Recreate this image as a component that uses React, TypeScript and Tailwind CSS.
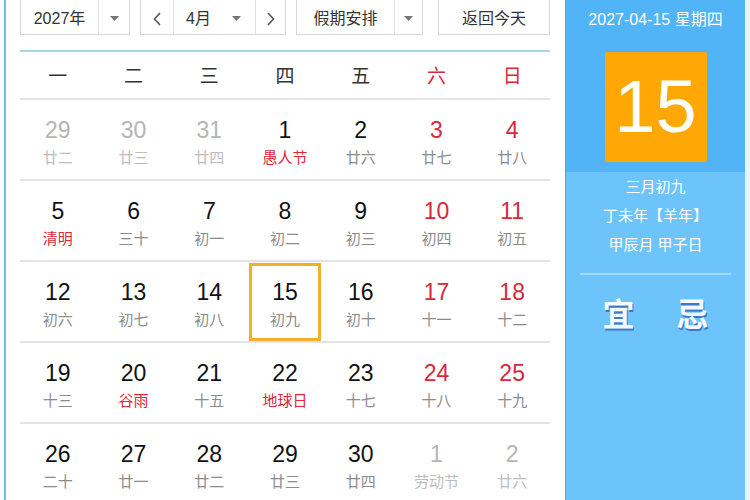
import React from "react";

type Day = { d: number; l: string; dim?: boolean; red?: boolean; fest?: boolean; sel?: boolean };

const weeks: Day[][] = [
  [
    { d: 29, l: "廿二", dim: true },
    { d: 30, l: "廿三", dim: true },
    { d: 31, l: "廿四", dim: true },
    { d: 1, l: "愚人节", fest: true },
    { d: 2, l: "廿六" },
    { d: 3, l: "廿七", red: true },
    { d: 4, l: "廿八", red: true },
  ],
  [
    { d: 5, l: "清明", fest: true },
    { d: 6, l: "三十" },
    { d: 7, l: "初一" },
    { d: 8, l: "初二" },
    { d: 9, l: "初三" },
    { d: 10, l: "初四", red: true },
    { d: 11, l: "初五", red: true },
  ],
  [
    { d: 12, l: "初六" },
    { d: 13, l: "初七" },
    { d: 14, l: "初八" },
    { d: 15, l: "初九", sel: true },
    { d: 16, l: "初十" },
    { d: 17, l: "十一", red: true },
    { d: 18, l: "十二", red: true },
  ],
  [
    { d: 19, l: "十三" },
    { d: 20, l: "谷雨", fest: true },
    { d: 21, l: "十五" },
    { d: 22, l: "地球日", fest: true },
    { d: 23, l: "十七" },
    { d: 24, l: "十八", red: true },
    { d: 25, l: "十九", red: true },
  ],
  [
    { d: 26, l: "二十" },
    { d: 27, l: "廿一" },
    { d: 28, l: "廿二" },
    { d: 29, l: "廿三" },
    { d: 30, l: "廿四" },
    { d: 1, l: "劳动节", dim: true },
    { d: 2, l: "廿六", dim: true },
  ],
];

const heads = ["一", "二", "三", "四", "五", "六", "日"];

function Caret() {
  return (
    <svg width="9" height="5" viewBox="0 0 9 5" className="fill-[#777]">
      <path d="M0 0h9L4.5 5z" />
    </svg>
  );
}

function Chevron({ dir }: { dir: "l" | "r" }) {
  return (
    <svg width="8" height="14" viewBox="0 0 8 14" fill="none" stroke="#555" strokeWidth="1.6">
      {dir === "l" ? <path d="M7 1L1.5 7 7 13" /> : <path d="M1 1l5.5 6L1 13" />}
    </svg>
  );
}

export default function App() {
  const cjk = { fontFamily: '"Liberation Sans", "Noto Sans CJK SC", sans-serif' };
  return (
    <div className="flex h-[500px] w-[750px] overflow-hidden bg-white" style={cjk}>
      {/* 左侧日历 */}
      <div className="ml-[4px] w-[561px] border-l-2 border-[#6cc0ec] pl-[14px]">
        <div className="-mt-[6px] flex h-[41px] items-stretch text-[16px] text-[#333]">
          <div className="flex w-[110px] border border-[#d6d6d6]">
            <span className="flex w-[77px] items-center justify-center pt-[8px]">2027年</span>
            <span className="flex flex-1 items-center justify-center border-l border-[#e2e2e2] pt-[8px]">
              <Caret />
            </span>
          </div>
          <div className="ml-[10px] flex w-[146px] border border-[#d6d6d6]">
            <span className="flex w-[32px] items-center justify-center pt-[8px]">
              <Chevron dir="l" />
            </span>
            <span className="flex w-[83px] items-center border-x border-[#e2e2e2] pl-[12px] pt-[8px]">
              <span className="flex-1">4月</span>
              <span className="mr-[14px]">
                <Caret />
              </span>
            </span>
            <span className="flex flex-1 items-center justify-center pt-[8px]">
              <Chevron dir="r" />
            </span>
          </div>
          <div className="ml-[10px] flex w-[127px] border border-[#d6d6d6]">
            <span className="flex w-[97px] items-center justify-center pt-[8px]">假期安排</span>
            <span className="flex flex-1 items-center justify-center border-l border-[#e2e2e2] pt-[8px]">
              <Caret />
            </span>
          </div>
          <div className="ml-[15px] flex w-[112px] items-center justify-center border border-[#d6d6d6] pt-[8px]">
            返回今天
          </div>
        </div>

        <div className="mt-[15px] w-[530px] border-t-2 border-[#a8d4e8]">
          <div className="grid h-[48px] grid-cols-7 items-center border-b-2 border-[#e3e3e3] pt-[4px] text-[19px]">
            {heads.map((h, i) => (
              <div key={h} className={`text-center ${i >= 5 ? "text-[#d8283c]" : "text-[#333]"}`}>
                {h}
              </div>
            ))}
          </div>
          {weeks.map((w, wi) => (
            <div key={wi} className="grid h-[81px] grid-cols-7 border-b-2 border-[#e3e3e3]">
              {w.map((c, ci) => (
                <div key={ci} className="flex items-center justify-center">
                  <div
                    className={`flex h-[78px] w-[72px] flex-col items-center justify-center pt-[4px] ${
                      c.sel ? "border-[3px] border-[#f0b02c]" : ""
                    }`}
                  >
                    <span
                      className={`text-[23px] leading-[28px] ${
                        c.dim ? "text-[#b5b5b5]" : c.red ? "text-[#d8283c]" : "text-[#111]"
                      }`}
                    >
                      {c.d}
                    </span>
                    <span
                      className={`mt-[4px] text-[15px] leading-[20px] ${
                        c.fest && !c.dim
                          ? "text-[#e0263a]"
                          : c.dim
                          ? "text-[#bdbdbd]"
                          : "text-[#8c8c8c]"
                      }`}
                    >
                      {c.l}
                    </span>
                  </div>
                </div>
              ))}
            </div>
          ))}
        </div>
      </div>

      {/* 右侧详情 */}
      <div className="flex w-[185px] flex-col border-l border-[#4aa8e6] border-r-[5px] border-r-[#e9f5fd] bg-[#6cc4fb] text-white">
        <div className="flex h-[172px] flex-col items-center bg-[#50b4f7]">
          <div className="mt-[8px] text-[16px]">2027-04-15 星期四</div>
          <div className="mt-[20px] flex h-[110px] w-[102px] items-center justify-center rounded-[2px] bg-[#ffa704] text-[74px] leading-none">
            15
          </div>
        </div>
        <div className="flex flex-col items-center text-[15px] leading-[29px]">
          <div>三月初九</div>
          <div>丁未年【羊年】</div>
          <div>甲辰月 甲子日</div>
        </div>
        <div className="mx-[14px] mt-[14px] border-t-2 border-[#a6dafc]" />
        <div className="mt-[16px] flex justify-center gap-[42px] text-[32px] font-bold text-[#f4f9ff] [text-shadow:1px_2px_0_#3a78c8]">
          <span>宜</span>
          <span>忌</span>
        </div>
      </div>
    </div>
  );
}
